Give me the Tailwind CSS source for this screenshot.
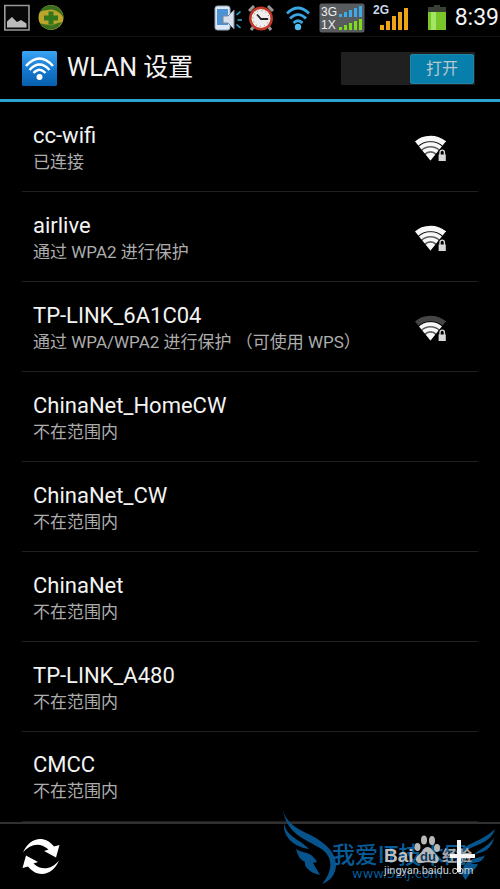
<!DOCTYPE html>
<html lang="zh-CN">
<head>
    <meta charset="UTF-8">
    <link rel="icon" href="data:,">
    <meta name="viewport" content="width=device-width, initial-scale=1.0">
    <title>WLAN 设置</title>
    <script src="https://cdn.jsdelivr.net/npm/@tailwindcss/browser@4"></script>
</head>
<body class="min-h-screen flex flex-col relative overflow-x-hidden bg-black text-[#f3f3f3] font-[Roboto,'Noto_Sans_CJK_SC',sans-serif]">

<!-- Shared wifi symbols -->
<svg class="absolute w-0 h-0">
    <defs>
        <clipPath id="wedge"><path d="M16.500 26.500-4 1.200V-2H37V1.200Z"/></clipPath>
    </defs>
    <symbol id="wifi-fan" viewBox="0 0 32 28">
        <g clip-path="url(#wedge)" fill="none">
            <circle cx="16.500" cy="26" r="18" fill="#606060"/>
            <circle cx="16.500" cy="26" r="15.800" stroke="#f8f8f8" stroke-width="3.800"/>
            <circle cx="16.500" cy="26" r="10.700" stroke="#f8f8f8" stroke-width="3.600"/>
            <circle cx="16.500" cy="26" r="7.200" fill="#f8f8f8"/>
        </g>
    </symbol>
    <symbol id="wifi-outer" viewBox="0 0 32 28">
        <circle cx="16.500" cy="26" r="21.500" clip-path="url(#wedge)" fill="none" stroke="currentColor" stroke-width="5.500"/>
    </symbol>
    <symbol id="wifi-lock" viewBox="0 0 32 28">
        <path d="M23.500 28V19.500C23.500 14 32 14 32 17.500V28Z" fill="#000"/>
        <path d="M26 21v-2.500a2.200 2.400 0 0 1 4.400 0V21" fill="none" stroke="#d8d8d8" stroke-width="1.400"/>
        <path d="M24.600 20.500H31.800V27H24.600Z" fill="#d8d8d8"/>
    </symbol>
</svg>

<div class="h-9 pl-1 pr-px flex items-center justify-between" aria-label="状态栏">
    <div class="flex items-center gap-2">
        <svg class="w-[26px] h-[28px]" viewBox="0 0 26 28">
            <path d="M.800 1.500H25V26H.800Z" fill="#080808" stroke="#999" stroke-width="1.600"/>
            <path d="M3 23.500V17.500L8 13l5 5 4-2 5.500 3.500v4Z" fill="#bbb"/>
        </svg>
        <svg class="w-[26px] h-[28px]" viewBox="0 0 26 28">
            <circle cx="13" cy="13.500" r="12.500" fill="#bba52b"/>
            <path d="M2 8C6 0 18-2 24 8c1 2 1.500 4 1.500 6C21 5 11 4 2 8Z" fill="#38701f"/>
            <path d="M2 19c7 3 14 1 22-1-5 10-17 10-22 1Z" fill="#38701f"/>
            <circle cx="13" cy="13.500" r="8" fill="#bba52b" fill-opacity=".6"/>
            <path d="M10.500 7.500h5v4H20v5h-4.500v4h-5v-4H6v-5h4.500Z" fill="#34761c"/>
        </svg>
    </div>
    <div class="flex items-center">
        <svg class="w-7 h-[26px] mr-1.5" viewBox="0 0 28 26">
            <rect x="1" y="1" width="15" height="24" rx="2.500" fill="#dce8f5" stroke="#98aabd"/>
            <rect x="3" y="4" width="11" height="16" fill="#4b93d2"/>
            <path d="M9 11h5l6-6v19l-6-6H9Z" fill="#d8dfea" stroke="#7b8798"/>
            <path d="m22.500 10 4-3.500M23.500 15H28M22.500 19.500l4 3.500" stroke="#2da8d5" stroke-width="1.600"/>
        </svg>
        <svg class="w-[26px] h-[26px] mr-3" viewBox="0 0 26 26">
            <path d="m6 21-3 4M20 21l3 4M1 6l5-5M20 1l5 5" stroke="#999" stroke-width="3"/>
            <circle cx="13" cy="13.500" r="10.700" fill="#eee" stroke="#c33826" stroke-width="2.500"/>
            <circle cx="13" cy="13.500" r="8" fill="none" stroke="#888" stroke-width="1" stroke-dasharray="1 3.200"/>
            <path d="m9 9.500 4 4.500h7" fill="none" stroke="#222" stroke-width="1.800"/>
        </svg>
        <svg class="w-6 h-[26px] mr-[9px]" viewBox="0 0 24 26">
            <path d="M1 8.500Q12-2.500 23 8.500M4 13.500Q12 5.500 20 13.500M7.500 18Q12 13.500 16.500 18" fill="none" stroke="#39a7e4" stroke-width="2.700"/>
            <circle cx="12" cy="22" r="3.200" fill="#55bdf3"/>
        </svg>
        <svg class="w-[46px] h-[30px] mr-2" viewBox="0 0 46 30">
            <rect x=".500" y=".500" width="45" height="29" rx="2" fill="#595c5f"/>
            <text x="2" y="13" font-size="12" font-family="Liberation Sans" fill="#eee">3G</text>
            <text x="2" y="26" font-size="12" font-family="Liberation Sans" fill="#eee">1X</text>
            <path d="M20 14v-3h3v3ZM25 14V9h3v5ZM30 14V7h3v7ZM35 14V5h3v9ZM40 14V3h3v11Z" fill="#3cabe9"/>
            <path d="M20 27v-3h3v3ZM25 27v-5h3v5ZM30 27v-7h3v7ZM35 27v-9h3v9ZM40 27V16h3v11Z" fill="#7ddc17"/>
        </svg>
        <svg class="w-[38px] h-7 mr-4" viewBox="0 0 38 28">
            <text x="0" y="10" font-size="12" font-weight="bold" font-family="Liberation Sans" fill="#c9d8ec">2G</text>
            <path d="M7 26v-5h4v5ZM13 26v-9h4v9ZM19 26V12h4v14ZM25 26V8h4v18ZM31 26V4h4v22Z" fill="#eea414"/>
        </svg>
        <svg class="w-5 h-[26px] mr-2" viewBox="0 0 20 26">
            <path d="M7 0h6v2h6v5H1V2h6Z" fill="#394036"/>
            <path d="M1 7h18v18H1Z" fill="#78c629"/>
            <path d="M4 7h5v18H4Z" fill="#a5e564"/>
        </svg>
        <span class="text-[23px] leading-8">8:39</span>
    </div>
</div>

<header class="h-[66px] px-[22px] flex items-center border-t border-t-[#101010] border-b-3 border-b-[#2ba4d1]">
    <svg class="w-[35px] h-[35px] shrink-0" viewBox="0 0 35 35">
        <defs>
            <linearGradient id="tile" x2="0" y2="1"><stop stop-color="#3ba5f4"/><stop offset=".5" stop-color="#147bd3"/><stop offset="1" stop-color="#075fac"/></linearGradient>
        </defs>
        <rect width="35" height="35" rx="1.500" fill="url(#tile)"/>
        <path d="M4 15Q17.500 0 31 15M7.500 19Q17.500 8 27.500 19M11.500 22Q17.500 15.500 23.500 22" fill="none" stroke="#fff" stroke-width="2.500"/>
        <circle cx="17.500" cy="26" r="3" fill="#fff"/>
    </svg>
    <h1 class="ml-[10px] text-[25px] leading-8">WLAN 设置</h1>
    <label class="ml-auto mr-[3px] w-[134px] h-[33px] p-px pt-[2px] flex justify-end bg-[#202020] cursor-pointer">
        <input type="checkbox" role="switch" aria-label="WLAN" checked class="sr-only">
        <span class="w-16 h-[30px] rounded-xs border border-[#2187a8] bg-[#087faa] text-[#b8c8ce] text-base leading-7 text-center">打开</span>
    </label>
</header>

<main class="grow px-[22px]">
    <ul>
        <li class="h-[90px] pt-[2px] pl-[11px] pr-8 flex items-center justify-between border-b border-[#202020]">
            <div>
                <h2 class="text-[22px] leading-7">cc-wifi</h2>
                <p class="text-[17px] leading-6 text-[#adadad]">已连接</p>
            </div>
            <svg class="w-8 h-7 text-[#f8f8f8]" viewBox="0 0 32 28" role="img" aria-label="信号强，已加密">
                <use href="#wifi-outer"/>
                <use href="#wifi-fan"/>
                <use href="#wifi-lock"/>
            </svg>
        </li>
        <li class="h-[90px] pt-[2px] pl-[11px] pr-8 flex items-center justify-between border-b border-[#202020]">
            <div>
                <h2 class="text-[22px] leading-7">airlive</h2>
                <p class="text-[17px] leading-6 text-[#adadad]">通过 WPA2 进行保护</p>
            </div>
            <svg class="w-8 h-7 text-[#f8f8f8]" viewBox="0 0 32 28" role="img" aria-label="信号强，已加密">
                <use href="#wifi-outer"/>
                <use href="#wifi-fan"/>
                <use href="#wifi-lock"/>
            </svg>
        </li>
        <li class="h-[90px] pt-[2px] pl-[11px] pr-8 flex items-center justify-between border-b border-[#202020]">
            <div>
                <h2 class="text-[22px] leading-7">TP-LINK_6A1C04</h2>
                <p class="text-[17px] leading-6 text-[#adadad]">通过 WPA/WPA2 进行保护 （可使用 WPS）</p>
            </div>
            <svg class="w-8 h-7 text-[#454545]" viewBox="0 0 32 28" role="img" aria-label="信号中等，已加密">
                <use href="#wifi-outer"/>
                <use href="#wifi-fan"/>
                <use href="#wifi-lock"/>
            </svg>
        </li>
        <li class="h-[90px] pt-[2px] pl-[11px] flex items-center border-b border-[#202020]">
            <div>
                <h2 class="text-[22px] leading-7">ChinaNet_HomeCW</h2>
                <p class="text-[17px] leading-6 text-[#adadad]">不在范围内</p>
            </div>
        </li>
        <li class="h-[90px] pt-[2px] pl-[11px] flex items-center border-b border-[#202020]">
            <div>
                <h2 class="text-[22px] leading-7">ChinaNet_CW</h2>
                <p class="text-[17px] leading-6 text-[#adadad]">不在范围内</p>
            </div>
        </li>
        <li class="h-[90px] pt-[2px] pl-[11px] flex items-center border-b border-[#202020]">
            <div>
                <h2 class="text-[22px] leading-7">ChinaNet</h2>
                <p class="text-[17px] leading-6 text-[#adadad]">不在范围内</p>
            </div>
        </li>
        <li class="h-[90px] pt-[2px] pl-[11px] flex items-center border-b border-[#202020]">
            <div>
                <h2 class="text-[22px] leading-7">TP-LINK_A480</h2>
                <p class="text-[17px] leading-6 text-[#adadad]">不在范围内</p>
            </div>
        </li>
        <li class="h-[90px] pl-[11px] flex items-center border-b border-[#202020]">
            <div>
                <h2 class="text-[22px] leading-7">CMCC</h2>
                <p class="text-[17px] leading-6 text-[#adadad]">不在范围内</p>
            </div>
        </li>
    </ul>
</main>

<footer class="h-[67px] px-[22px] flex items-center justify-between border-t-2 border-[#303030]">
    <button type="button" aria-label="刷新" class="cursor-pointer">
        <svg class="w-[38px] h-[38px]" viewBox="0 0 38 38">
            <path id="arrow" d="M1 14.500C7 0 22-4 32 8.500L37.500 7 34 19.500 22 13 26.500 11.500C18 3.500 8 6 1 14.500Z" fill="#fff"/>
            <use href="#arrow" transform="rotate(180 19 18.500)"/>
        </svg>
    </button>
    <button type="button" aria-label="添加网络" class="relative z-10 mr-[3px] cursor-pointer">
        <svg class="w-8 h-[34px]" viewBox="0 0 32 34">
            <path d="M14 0h4v14h14v4H18v14h-4V18H7v-4h7Z" fill="#f6f6f6"/>
        </svg>
    </button>
</footer>

<!-- Watermarks over the bottom bar -->
<div class="absolute right-0 bottom-0 w-[230px] h-[89px] pointer-events-none">
    <svg class="absolute inset-0 w-[230px] h-[89px]" viewBox="0 0 230 89">
        <g fill="#07548c">
            <path d="M13 11C20 31 39 31 53 43 72 57 69 78 52 84 64 70 63 56 50 48 33 38 18 34 13 11Z"/>
            <path d="M14 24C18 38 30 39 39 49 24 47 13 37 14 24Z"/>
            <path d="M26 49C33 54 40 50 47 62L43 63 50 75C37 72 34 65 35 62 29 59 28 55 26 49Z"/>
            <path d="M225 29C221 42 208 44 199 49 188 56 187 66 193 76 184 67 184 54 195 47 205 41 216 38 225 29Z"/>
            <path d="M224 38C222 48 214 53 204 54 211 49 218 46 224 38Z"/>
            <path d="M215 55C212 64 207 61 201 64L208 64C205 71 200 71 196 80 188 72 194 63 201 60 206 57 211 58 215 55Z"/>
        </g>
    </svg>
    <div class="absolute left-[62px] top-[42px] text-[23px] leading-7 font-medium text-[#075b98] whitespace-nowrap">我爱IT技术网</div>
    <div class="absolute left-[82px] top-[64px] text-[13px] leading-5 text-[#075b98] font-['DejaVu_Sans']">www.52ij.com</div>
    <div class="absolute left-[114px] top-[44px] text-[19px] leading-6 font-bold text-[#c0c0c0] font-['Liberation_Sans']">Bai</div>
    <svg class="absolute left-[144px] top-[35px] w-7 h-[30px]" viewBox="0 0 28 30">
        <g fill="#b8b8b8">
            <ellipse cx="3.500" cy="12" rx="3" ry="4"/>
            <ellipse cx="10" cy="5" rx="3" ry="4.500"/>
            <ellipse cx="18" cy="5.500" rx="3" ry="4.500"/>
            <ellipse cx="23" cy="13" rx="3" ry="4"/>
            <path d="M13.500 12c4 0 6 5 9 8 5 5 1 9-3 8-4-1-8-1-12 0-5 1-8-4-3-8 4-3 5-8 9-8Z"/>
        </g>
        <text x="6" y="26" font-size="13" font-weight="bold" font-family="Liberation Sans" fill="#0b3a5c">du</text>
    </svg>
    <div class="absolute left-[172px] top-[44px] text-[15px] leading-6 font-bold text-[#a5a5a5]">经验</div>
    <div class="absolute left-[114px] top-[63px] text-[11px] leading-4 text-[#d0d0d0] font-[Roboto]">jingyan.baidu.com</div>
</div>
</body>
</html>
